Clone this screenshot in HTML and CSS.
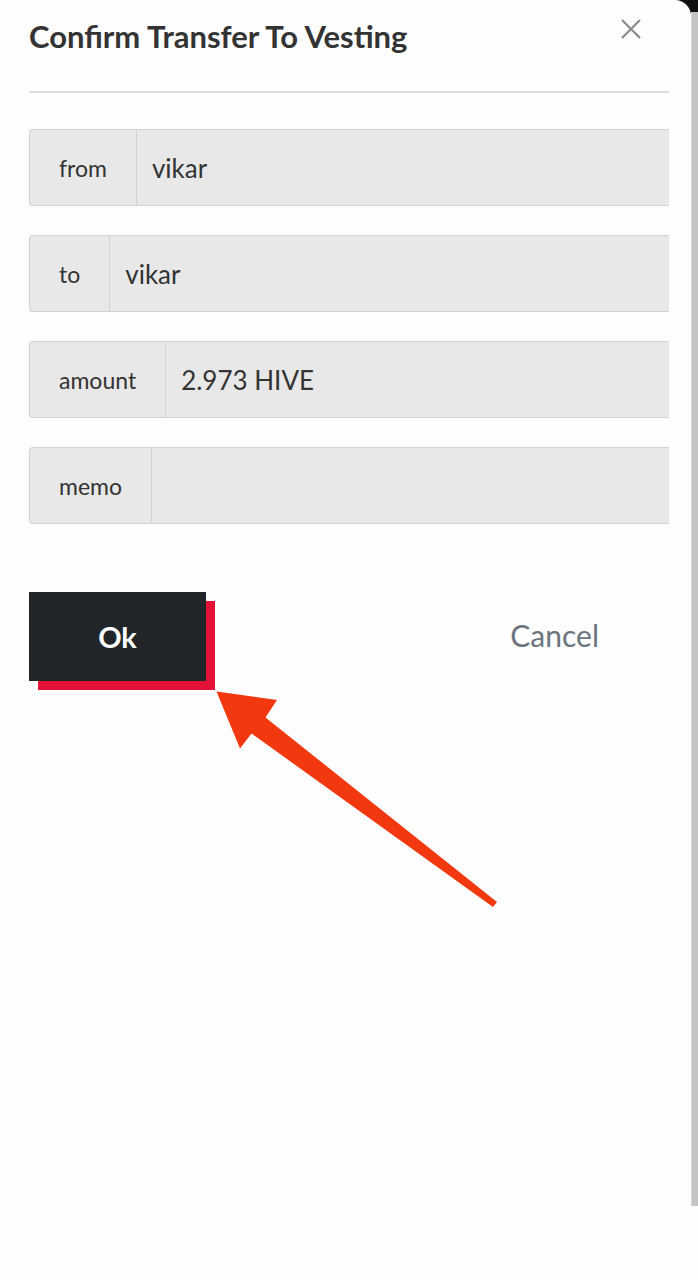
FILE: index.html
```
<!DOCTYPE html>
<html lang="en">
<head>
	<meta charset="UTF-8">
	<title>Confirm Transfer To Vesting</title>
	<link rel="stylesheet" href="styles.css">
</head>
<body>

	<div class="screen">
		<div class="modal">
			<div class="modal-header">
				<h2>Confirm Transfer To Vesting</h2>
				<button class="close" aria-label="Close">
					<svg width="20" height="20" viewBox="0 0 20 20"><path d="M1 1 L19 19 M19 1 L1 19" stroke="#8a8a8a" stroke-width="2.2" fill="none"/></svg>
				</button>
			</div>

			<div class="modal-body">
				<div class="field">
					<span class="field-label">from</span>
					<div class="field-value">vikar</div>
				</div>
				<div class="field">
					<span class="field-label">to</span>
					<div class="field-value">vikar</div>
				</div>
				<div class="field">
					<span class="field-label">amount</span>
					<div class="field-value">2.973 HIVE</div>
				</div>
				<div class="field">
					<span class="field-label">memo</span>
					<div class="field-value"></div>
				</div>
			</div>

			<div class="actions">
				<button class="btn-ok">Ok</button>
				<button class="btn-cancel">Cancel</button>
			</div>
		</div>
		<div class="scrollbar"></div>

		<!-- annotation arrow drawn over the page -->
		<svg class="arrow" width="698" height="1280" viewBox="0 0 698 1280">
			<polygon points="216.5,691.5 277,700 265.5,717.5 497,902 493,907 251.5,733.5 240,748.5" fill="#f2380f"/>
		</svg>
	</div>

</body>
</html>
```

FILE: styles.css
```
body {
	margin: 0;
	padding: 0;
	font-family: Lato, "Open Sans", sans-serif;
	background-color: #fdfdfd;
}
.screen {
	position: relative;
	display: flex;
	width: 698px;
	height: 1280px;
	overflow: hidden;
	background: linear-gradient(#111, #111) top right / 30px 14px no-repeat, #fdfdfd;
}
.modal {
	width: 691px;
	flex-shrink: 0;
	background-color: #fdfdfd;
	border-top-right-radius: 16px;
	box-sizing: border-box;
	padding: 0 22px 0 29px;
}
.scrollbar {
	width: 7px;
	height: 1194px;
	margin-top: 12px;
	background-color: #c3c3c3;
	border-left: 1px solid #d6d6d6;
	box-sizing: border-box;
}
.modal-header {
	display: flex;
	justify-content: space-between;
	align-items: flex-start;
	height: 91px;
	border-bottom: 2px solid #dedede;
}
.modal-header h2 {
	margin: 17px 0 0 0;
	font-size: 31px;
	font-weight: 700;
	color: #333;
}
.close {
	border: none;
	background: none;
	padding: 0;
	margin: 19px 28px 0 0;
	width: 20px;
	height: 20px;
	cursor: pointer;
}
.modal-body {
	display: flex;
	flex-direction: column;
	gap: 29px;
	padding-top: 36px;
}
.field {
	display: flex;
	height: 77px;
	box-sizing: border-box;
	border: 1px solid #d2d2d2;
	border-right: none;
	border-radius: 4px 0 0 4px;
	background-color: #e8e8e8;
}
.field-label {
	display: flex;
	align-items: center;
	padding: 0 29px 0 29px;
	font-size: 23px;
	color: #333;
	border-right: 1px solid #d2d2d2;
}
.field-value {
	flex: 1;
	display: flex;
	align-items: center;
	padding-left: 15px;
	font-size: 26px;
	color: #333;
}
.actions {
	display: flex;
	justify-content: space-between;
	align-items: center;
	margin-top: 68px;
	padding-right: 70px;
}
.btn-ok {
	width: 177px;
	height: 89px;
	border: none;
	background-color: #212529;
	color: #fff;
	font-family: Lato, sans-serif;
	font-size: 29px;
	font-weight: 700;
	box-shadow: 9px 9px 0 #e31337;
	cursor: pointer;
}
.btn-cancel {
	border: none;
	background: none;
	padding: 0 0 4px 0;
	font-family: Lato, sans-serif;
	font-size: 30px;
	color: #6c757d;
	cursor: pointer;
}
.arrow {
	position: absolute;
	left: 0;
	top: 0;
	pointer-events: none;
}
```
